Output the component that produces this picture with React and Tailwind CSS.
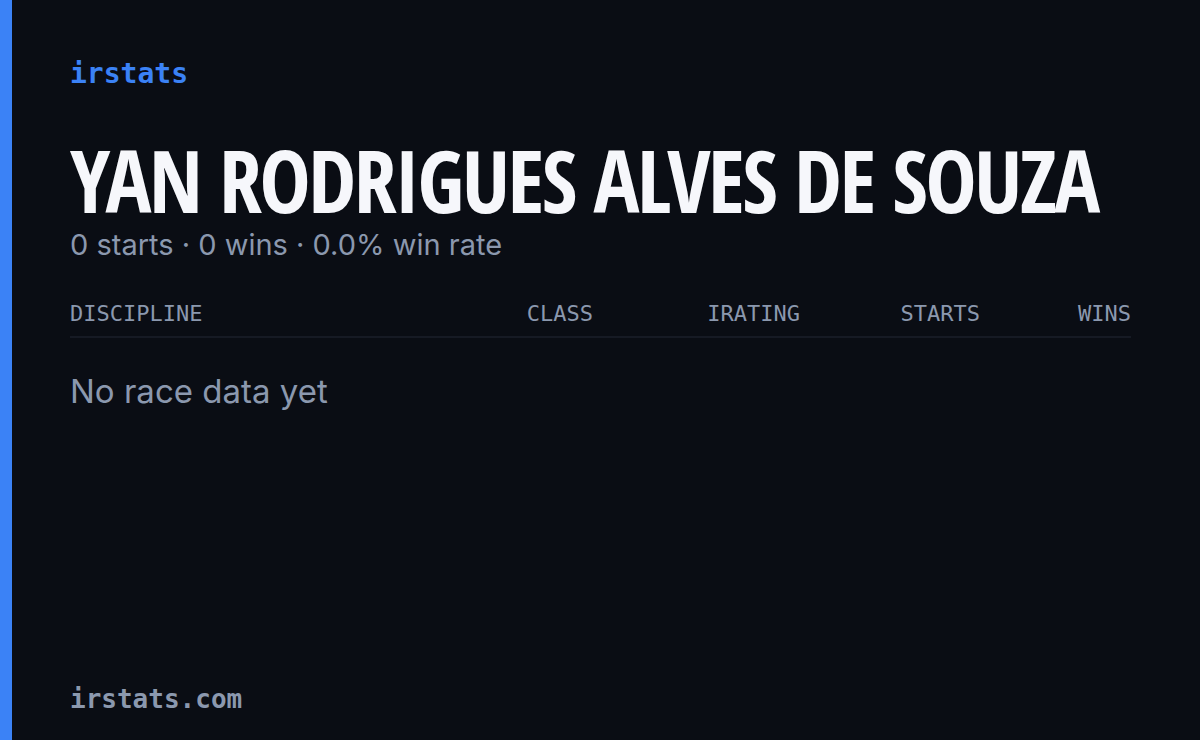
const columns = ["Discipline", "Class", "iRating", "Starts", "Wins"];

const driver = {
  name: "Yan Rodrigues Alves de Souza",
  starts: 0,
  wins: 0,
};

export default function App() {
  const winRate = driver.starts ? (driver.wins / driver.starts) * 100 : 0;

  return (
    <div className="flex h-[740px] w-[1200px] bg-[#0a0d14]">
      {/* accent stripe */}
      <div className="w-3 shrink-0 bg-[#3b82f6]" />

      <div className="flex flex-1 flex-col pl-[58px] pr-[69px]">
        <div className="mt-[60px] font-['DejaVu_Sans_Mono',monospace] text-[28px] font-bold leading-none text-[#3b82f6]">
          irstats
        </div>

        <h1 className="mt-[49px] font-['Open_Sans_Condensed','Roboto_Condensed',sans-serif] text-[86px] font-extrabold uppercase leading-none tracking-[-0.029em] text-[#f6f7fb] [font-stretch:condensed]">
          {driver.name}
        </h1>

        <p className="mt-[7px] font-['Inter',sans-serif] text-[29px] leading-none text-[#8b98ae]">
          {driver.starts} starts · {driver.wins} wins · {winRate.toFixed(1)}% win rate
        </p>

        <div className="mt-[44px] grid grid-cols-[383px_140px_207px_180px_151px] border-b-2 border-[#161a24] pb-[11px] font-['DejaVu_Sans_Mono',monospace] text-[22px] uppercase leading-none text-[#8b98ae]">
          {columns.map((col, i) => (
            <div key={col} className={i === 0 ? "text-left" : "text-right"}>
              {col}
            </div>
          ))}
        </div>

        <div className="mt-[37px] font-['Inter',sans-serif] text-[33px] leading-none text-[#8b98ae]">
          No race data yet
        </div>

        <div className="mt-auto pb-[28px] font-['DejaVu_Sans_Mono',monospace] text-[26px] font-bold leading-none text-[#8b98ae]">
          irstats.com
        </div>
      </div>
    </div>
  );
}
